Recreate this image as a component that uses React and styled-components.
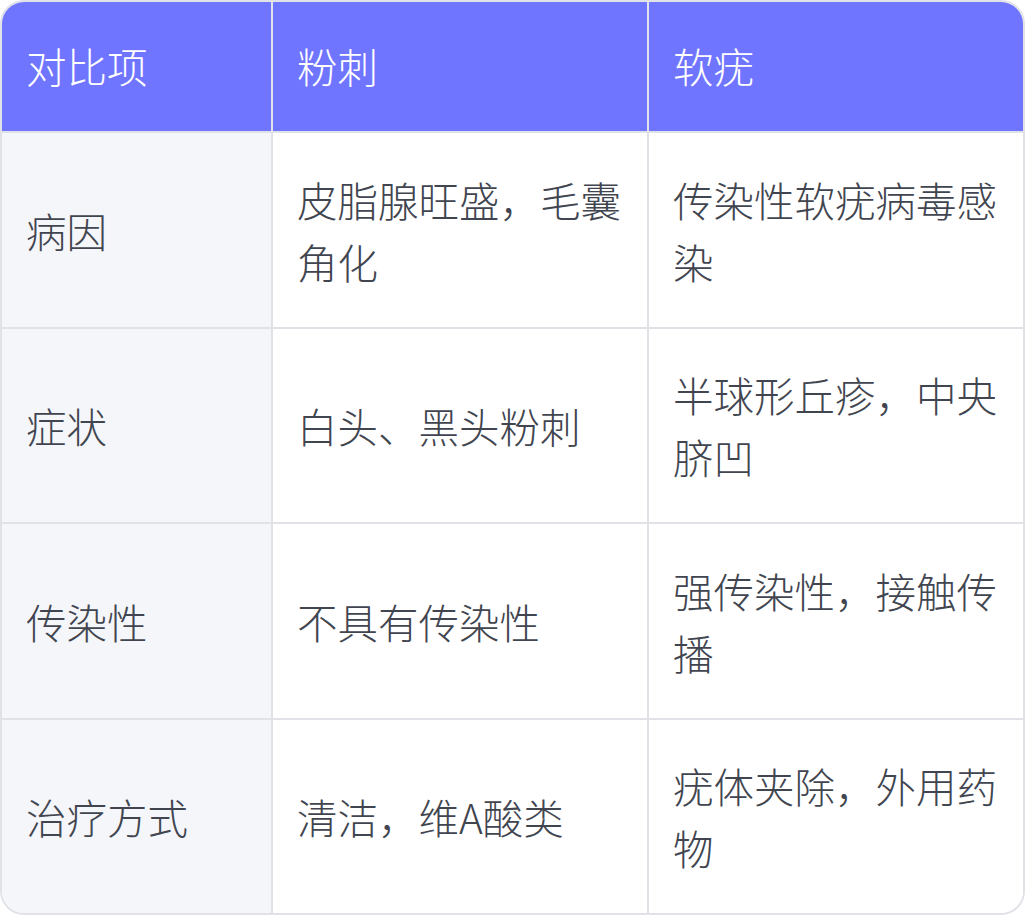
import styled, { createGlobalStyle } from 'styled-components';

const GlobalStyle = createGlobalStyle`
  html, body {
    margin: 0;
    padding: 0;
    background: #ffffff;
  }
  body {
    font-family: "Noto Sans CJK SC", "Noto Sans", sans-serif;
  }
`;

const StyledTable = styled.div`
  display: grid;
  grid-template-columns: 271px 376px 1fr;
  width: 1025px;
  box-sizing: border-box;
  border: 2px solid #e1e2e8;
  border-radius: 24px;
  overflow: hidden;
  background-color: #ffffff;
`;

const StyledCell = styled.div`
  box-sizing: border-box;
  display: flex;
  align-items: center;
  padding: ${(p) => (p.$head ? '33px 24px 34px' : '35.5px 24px 34px')};
  font-size: 40.5px;
  font-weight: 300;
  line-height: 62px;
  color: ${(p) => (p.$head ? '#ffffff' : '#41454f')};
  background-color: ${(p) =>
    p.$head ? '#7075ff' : p.$label ? '#f5f6fa' : '#ffffff'};
  border-right: ${(p) => (p.$last ? 'none' : '2px solid #e1e2e8')};
  border-bottom: ${(p) => (p.$bottom ? 'none' : '2px solid #e1e2e8')};
`;

const headers = ['对比项', '粉刺', '软疣'];

const rows = [
  ['病因', '皮脂腺旺盛，毛囊角化', '传染性软疣病毒感染'],
  ['症状', '白头、黑头粉刺', '半球形丘疹，中央脐凹'],
  ['传染性', '不具有传染性', '强传染性，接触传播'],
  ['治疗方式', '清洁，维A酸类', '疣体夹除，外用药物'],
];

export default function App() {
  return (
    <>
      <GlobalStyle />
      <StyledTable>
        {headers.map((h, i) => (
          <StyledCell key={h} $head $last={i === 2}>
            {h}
          </StyledCell>
        ))}
        {rows.map((row, r) =>
          row.map((text, c) => (
            <StyledCell
              key={`${r}-${c}`}
              $label={c === 0}
              $last={c === 2}
              $bottom={r === rows.length - 1}
            >
              {text}
            </StyledCell>
          ))
        )}
      </StyledTable>
    </>
  );
}
